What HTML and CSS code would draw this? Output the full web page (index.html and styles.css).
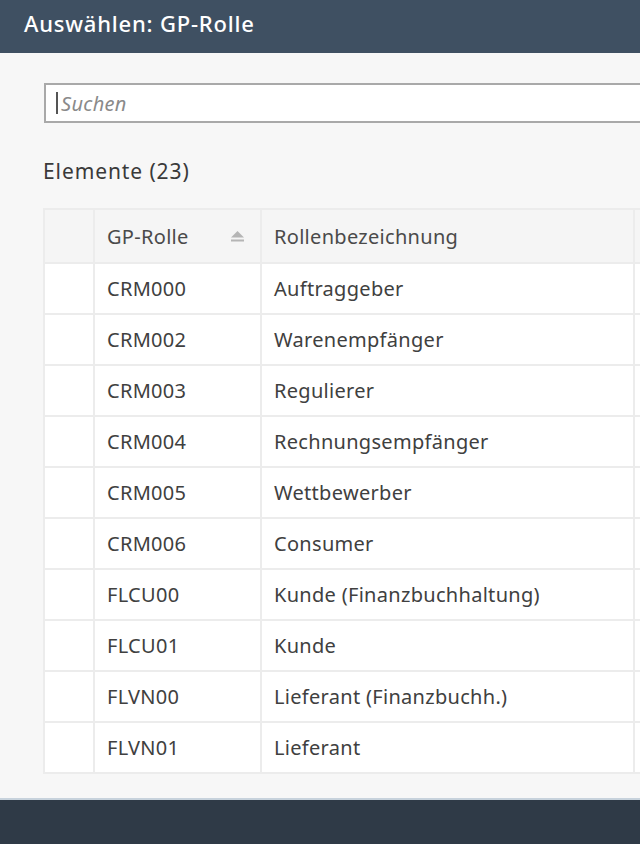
FILE: index.html
```html
<!DOCTYPE html>
<html lang="de">
<head>
<meta charset="utf-8">
<title>Auswählen: GP-Rolle</title>
<link rel="stylesheet" href="styles.css">
</head>
<body>
<div class="page">
  <header class="titlebar">
    <h1 class="title">Auswählen: GP-Rolle</h1>
  </header>
  <main class="content">
    <div class="search">
      <span class="caret"></span><span class="placeholder">Suchen</span>
    </div>
    <h2 class="count">Elemente (23)</h2>
    <div class="table-wrap">
      <table class="grid">
        <colgroup>
          <col class="c-sel"><col class="c-role"><col class="c-desc"><col class="c-more">
        </colgroup>
        <thead>
          <tr>
            <th class="sel"></th>
            <th><div class="th-inner"><span>GP-Rolle</span>
              <svg class="sort" width="17" height="12" viewBox="0 0 17 12"><path d="M8.5 1 L15 7.5 L2 7.5 Z" fill="#b5b5b5"/><rect x="2" y="9.5" width="13" height="2" fill="#b5b5b5"/></svg></div></th>
            <th>Rollenbezeichnung</th>
            <th></th>
          </tr>
        </thead>
        <tbody>
          <tr><td class="sel"></td><td>CRM000</td><td>Auftraggeber</td><td></td></tr>
          <tr><td class="sel"></td><td>CRM002</td><td>Warenempfänger</td><td></td></tr>
          <tr><td class="sel"></td><td>CRM003</td><td>Regulierer</td><td></td></tr>
          <tr><td class="sel"></td><td>CRM004</td><td>Rechnungsempfänger</td><td></td></tr>
          <tr><td class="sel"></td><td>CRM005</td><td>Wettbewerber</td><td></td></tr>
          <tr><td class="sel"></td><td>CRM006</td><td>Consumer</td><td></td></tr>
          <tr><td class="sel"></td><td>FLCU00</td><td>Kunde (Finanzbuchhaltung)</td><td></td></tr>
          <tr><td class="sel"></td><td>FLCU01</td><td>Kunde</td><td></td></tr>
          <tr><td class="sel"></td><td>FLVN00</td><td>Lieferant (Finanzbuchh.)</td><td></td></tr>
          <tr><td class="sel"></td><td>FLVN01</td><td>Lieferant</td><td></td></tr>
        </tbody>
      </table>
    </div>
  </main>
  <footer class="footer"></footer>
</div>
</body>
</html>
```
FILE: styles.css
```css
html, body {
  margin: 0;
  padding: 0;
}
body {
  font-family: "Noto Sans", "Open Sans", sans-serif;
  background: #f7f7f7;
  color: #333;
}
.page {
  width: 640px;
  height: 844px;
  display: flex;
  flex-direction: column;
  overflow: hidden;
}
.titlebar {
  height: 53px;
  background: #3f5062;
  display: flex;
  align-items: center;
  padding-left: 24px;
  flex: none;
}
.title {
  margin: 0;
  color: #ffffff;
  font-size: 22px;
  font-weight: 500;
  letter-spacing: 0.8px;
  padding-bottom: 8px;
}
.content {
  flex: 1;
  padding: 30px 0 0 43px;
  background: #f7f7f7;
}
.search {
  margin-left: 1px;
  height: 40px;
  width: 640px;
  box-sizing: border-box;
  border: 2px solid #a9a9a9;
  border-right: none;
  background: #fff;
  display: flex;
  align-items: center;
  padding-left: 10px;
}
.caret {
  width: 2px;
  height: 22px;
  background: #555;
  margin-right: 3px;
}
.placeholder {
  font-style: italic;
  color: #8a8a8a;
  font-size: 20px;
  letter-spacing: 0.3px;
}
.count {
  margin: 33px 0 0 0;
  font-size: 21px;
  font-weight: 400;
  color: #3a3a3a;
  line-height: 30px;
  letter-spacing: 0.9px;
}
.table-wrap {
  margin-top: 22px;
  width: 640px;
  overflow: hidden;
}
.grid {
  border-collapse: collapse;
  table-layout: fixed;
  width: 680px;
  background: #fff;
  font-size: 20px;
  letter-spacing: 0.3px;
}
.c-sel { width: 50px; }
.c-role { width: 167px; }
.c-desc { width: 373px; }
.c-more { width: 90px; }
.grid th, .grid td {
  border: 2px solid #ececec;
  text-align: left;
  padding: 0 0 0 12px;
  white-space: nowrap;
}
.grid th {
  height: 52px;
  background: #f5f5f5;
  font-weight: 400;
  color: #4a4a4a;
}
.grid td {
  height: 49px;
  color: #404040;
}
.th-inner {
  display: flex;
  align-items: center;
  justify-content: space-between;
  padding-right: 14px;
}
.sort { display: block; }
.footer {
  flex: none;
  height: 44px;
  background: #2f3a47;
  border-top: 2px solid #c7d2dc;
}
```
